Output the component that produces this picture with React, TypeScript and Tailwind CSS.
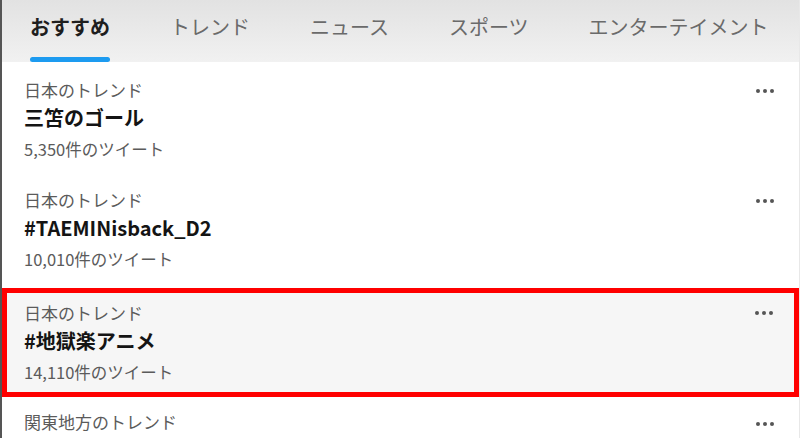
import React from "react";

const font = { fontFamily: '"Noto Sans CJK JP", "Noto Sans", sans-serif' };

function Dots({ className }: { className: string }) {
  return (
    <div className={"absolute flex gap-[3px] " + className}>
      <span className="block h-[4px] w-[4px] rounded-full bg-[#555]" />
      <span className="block h-[4px] w-[4px] rounded-full bg-[#555]" />
      <span className="block h-[4px] w-[4px] rounded-full bg-[#555]" />
    </div>
  );
}

function Row({ label, title, count, className = "", dots = "right-[25px] top-[21px]" }: { label: string; title?: string; count?: string; className?: string; dots?: string }) {
  return (
    <div className={"relative " + className}>
      <Dots className={dots} />
      <div className="text-[17px] leading-[22px] text-[#5b5b5b]">{label}</div>
      {title && <div className="mt-[4px] text-[20px] leading-[26px] font-bold text-[#141414]">{title}</div>}
      {count && <div className="mt-[7px] text-[16.5px] leading-[22px] text-[#5b5b5b]">{count}</div>}
    </div>
  );
}

export default function App() {
  const tabs = ["おすすめ", "トレンド", "ニュース", "スポーツ", "エンターテイメント"];
  return (
    <div className="h-[438px] w-[800px] overflow-hidden bg-white border-l-2 border-l-[#555] border-r border-r-[#e8e8e8]" style={font}>
      <div className="h-[62px] bg-gradient-to-b from-[#e2e2e2] to-[#f1f1f1] flex pl-[28px] gap-[60px]">
        {tabs.map((t, i) => (
          <div key={t} className="relative flex flex-col items-center">
            <div className={"pt-[13px] text-[20px] leading-[28px] " + (i === 0 ? "font-bold text-[#1e1e1e]" : "text-[#6a6a6a]")}>{t}</div>
            {i === 0 && <div className="absolute bottom-0 h-[5px] w-[80px] rounded-full bg-[#1d9bf0]" />}
          </div>
        ))}
      </div>
      <div className="pt-[6px]">
        <Row className="h-[110px] pt-[11px] pl-[22px]" label="日本のトレンド" title="三笘のゴール" count="5,350件のツイート" />
        <Row className="h-[110px] pt-[11px] pl-[22px]" label="日本のトレンド" title="#TAEMINisback_D2" count="10,010件のツイート" />
        <div className="h-[109px] border-[5px] border-[#ff0000] bg-[#f6f6f6]">
          <Row className="pt-[9px] pl-[17px]" dots="right-[21px] top-[18px]" label="日本のトレンド" title="#地獄楽アニメ" count="14,110件のツイート" />
        </div>
        <Row className="h-[110px] pt-[14px] pl-[22px]" dots="right-[25px] top-[25px]" label="関東地方のトレンド" />
      </div>
    </div>
  );
}
